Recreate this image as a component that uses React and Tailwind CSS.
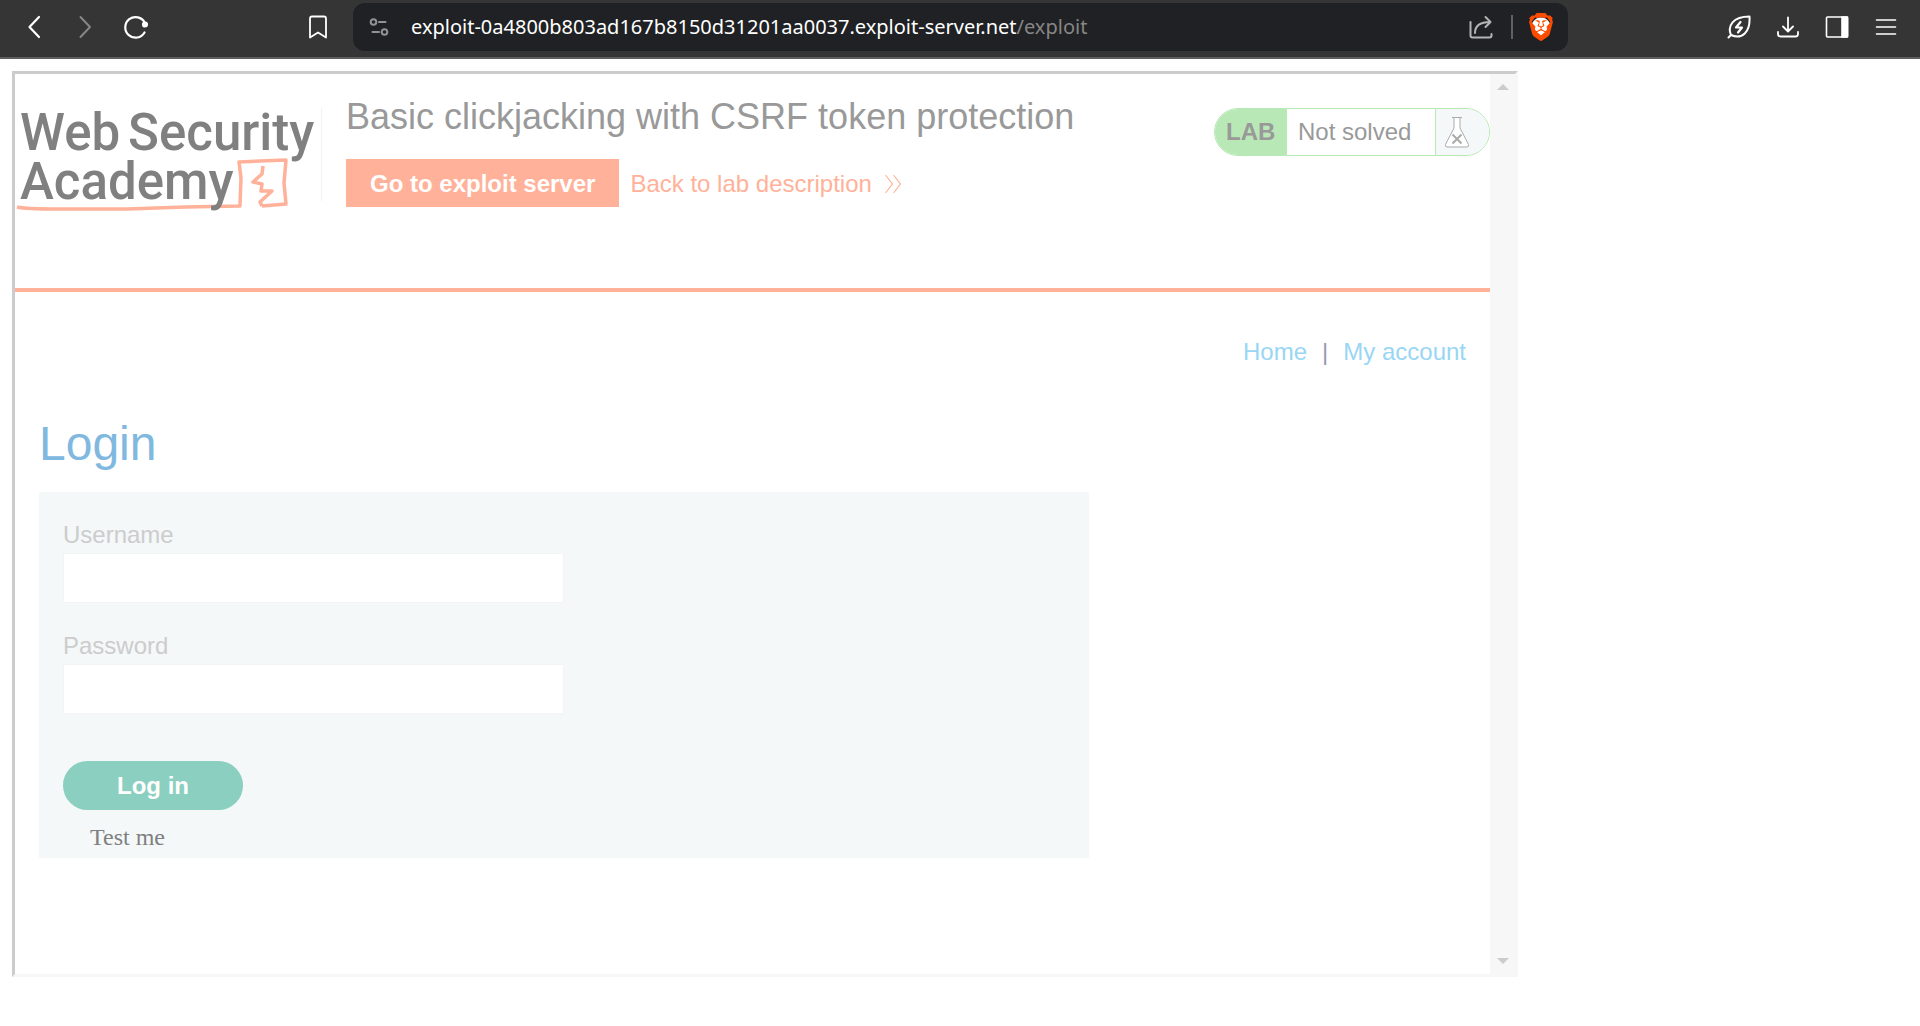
import { SiBrave } from "react-icons/si";

function ToolbarIcon({ label, className = "", children }) {
  return (
    <button type="button" aria-label={label} className={`flex h-8 w-8 shrink-0 items-center justify-center ${className}`}>
      {children}
    </button>
  );
}

function Stroke({ children, width = 2, className = "" }) {
  return (
    <svg viewBox="0 0 24 24" fill="none" stroke="currentColor" strokeWidth={width} strokeLinecap="round" strokeLinejoin="round" className={`h-6 w-6 ${className}`} aria-hidden="true">
      {children}
    </svg>
  );
}

function BrowserBar() {
  return (
    <header className="flex items-center border-b-2 border-[#5f5f5f] bg-[#353535] px-[18px] pb-[6px] pt-[3px] text-white">
      <ToolbarIcon label="Back">
        <Stroke width={2.2}><path d="M17 2 7.500 12 17 22" /></Stroke>
      </ToolbarIcon>
      <ToolbarIcon label="Forward" className="ml-5 text-[#868686]">
        <Stroke><path d="M6.500 2 16 12 6.500 22" /></Stroke>
      </ToolbarIcon>
      <ToolbarIcon label="Reload" className="ml-[18px]">
        <Stroke width={2.2}><path d="M20.500 17.500A10.300 10.300 0 1 1 20.800 7.800" /><circle cx="21" cy="9.500" r="2" fill="currentColor" /></Stroke>
      </ToolbarIcon>
      <ToolbarIcon label="Bookmark this page" className="ml-[150px]">
        <Stroke width={1.8}><path d="M4 3.500Q4 1.500 6 1.500H18Q20 1.500 20 3.500V22.500L12 17.500 4 22.500Z" /></Stroke>
      </ToolbarIcon>
      <div className="ml-[19px] flex h-12 w-[64.5%] items-center rounded-xl bg-[#202124] pr-[11px]">
        <button type="button" aria-label="Site settings" className="ml-4 flex h-8 w-6 items-center text-[#8f9297]">
          <svg viewBox="0 0 24 24" fill="none" stroke="currentColor" strokeWidth="2" strokeLinecap="round" className="h-6 w-6" aria-hidden="true">
            <circle cx="4.500" cy="7" r="2.800" /><path d="M10 7H16.500" /><circle cx="15.500" cy="17" r="2.800" /><path d="M3.500 17H10" />
          </svg>
        </button>
        <a href="#exploit" className="ml-[18px] min-w-0 flex-1 truncate font-['Noto_Sans','Open_Sans',sans-serif] text-[20px] leading-8">
          exploit-0a4800b803ad167b8150d31201aa0037.exploit-server.net<span className="text-[#868686]">/exploit</span>
        </a>
        <ToolbarIcon label="Share" className="text-[#b4b4b4]">
          <Stroke><path d="M1.500 7V20.500Q1.500 22.500 3.500 22.500H20.500Q22.500 22.500 22.500 20.500V19" /><path d="M6 18Q6 7 21 7M16.500 2 21.500 7 16.500 12" /></Stroke>
        </ToolbarIcon>
        <span className="ml-3.5 h-6 w-0.5 bg-[#5f6166]" />
        <ToolbarIcon label="Brave Shields" className="ml-3">
          <span className="flex h-7 w-7 items-center justify-center bg-[radial-gradient(circle,white_9px,transparent_10px)]">
            <SiBrave className="h-7 w-7 text-[#fb4c00]" />
          </span>
        </ToolbarIcon>
      </div>
      <div className="ml-auto flex gap-[17px]">
        <ToolbarIcon label="Battery saver">
          <Stroke><path d="M1.500 22.500 4 20C0 11 6 1.500 22.500 1.500 23.500 17 15 25 4 20" /><path d="M13.500 7 9 12.500H15L11 17.500" strokeWidth="2.200" /></Stroke>
        </ToolbarIcon>
        <ToolbarIcon label="Downloads">
          <Stroke width={1.8}><path d="M12 2.500V16M7 11.500 12 16.500 17 11.500M2 17V19Q2 21.500 4.500 21.500H19.500Q22 21.500 22 19V17" /></Stroke>
        </ToolbarIcon>
        <ToolbarIcon label="Sidebar">
          <Stroke width={1.6}><rect x="1.500" y="2" width="21" height="20" rx="1" /><path d="M17 2H22.500V22H17Z" fill="currentColor" /></Stroke>
        </ToolbarIcon>
        <ToolbarIcon label="Menu">
          <Stroke width={1.6}><path d="M2.500 5H21.500M2.500 12H21.500M2.500 19H21.500" /></Stroke>
        </ToolbarIcon>
      </div>
    </header>
  );
}

function AcademyLogo() {
  return (
    <a href="#academy" className="relative block h-[93px] w-[307px] shrink-0 border-r border-[#f2f2f2] pl-[5px] font-['Roboto',sans-serif] text-[51px] font-medium leading-[49px] text-[#808080]">
      <svg viewBox="0 0 306 108" className="absolute left-0 top-0 h-[108px] w-[306px]" fill="none" stroke="#ffb199" strokeLinejoin="round" aria-hidden="true">
        <path d="M2 99Q10 101 45 101L112 101 170 99 225 98V97L226 70 224 54 271 52 269 75 271 96 247 98" strokeWidth="3.500" />
        <path d="M248 58 247 66 238 74 247 76 246 83 257 83 245 94 247 98" strokeWidth="3.500" />
      </svg>
      <span className="relative flex gap-2"><span>Web</span><span>Security</span></span>
      <span className="relative block">Academy</span>
    </a>
  );
}

function LabStatus() {
  return (
    <div className="flex h-12 w-[276px] shrink-0 overflow-hidden rounded-full border border-[#b8e8b6] text-2xl text-[#999]">
      <strong className="flex w-[72px] items-center bg-[#b8e8b6] pl-[11px]">LAB</strong>
      <p className="flex flex-1 items-center pl-[11px]">Not solved</p>
      <span className="flex w-[54px] items-center border-l border-[#b8e8b6] bg-[#f4f8f9] pl-2">
        <svg viewBox="0 0 26 32" className="h-8 w-[26px]" fill="white" stroke="#aaaaaa" aria-hidden="true">
          <path d="M10 2V12L1.500 28.500Q1 31 3 31H23Q25 31 24.500 28.500L16 12V2M8 1.500H18" />
          <path d="M8.500 18.500 17.500 27.500M17.500 18.500 8.500 27.500" strokeWidth="2" />
        </svg>
      </span>
    </div>
  );
}

function Field({ id, label, type }) {
  return (
    <div className="mb-[25px]">
      <label htmlFor={id} className="block text-2xl leading-9 text-[#ccc]">{label}</label>
      <input id={id} name={id} type={type} className="block h-[50px] w-full max-w-[501px] border border-[#f2f4f5] bg-white px-3 text-2xl text-[#999]" />
    </div>
  );
}

export default function App() {
  return (
    <div className="min-h-screen bg-white font-['Liberation_Sans',Arial,sans-serif]">
      <BrowserBar />
      <div className="px-3 pt-3">
        <div className="flex w-full max-w-[1506px] border-[3px] border-b-[#f7f7f7] border-l-[#ccc] border-r-[#f7f7f7] border-t-[#ccc]">
          <main className="min-w-0 flex-1 pb-[116px]">
            <section className="flex items-start border-b-4 border-[#ffb199] pb-[81px] pt-[22px]">
              <div className="pt-3"><AcademyLogo /></div>
              <div className="ml-6 flex-1">
                <h2 className="text-4xl leading-[42px] text-[#999]">Basic clickjacking with CSRF token protection</h2>
                <div className="mt-[21px] flex items-center gap-[11px] text-2xl text-[#ffb199]">
                  <a href="#server" className="flex h-12 items-center bg-[#ffb199] px-6 pt-px font-bold text-white">Go to exploit server</a>
                  <a href="#description" className="flex items-center gap-3 pt-px">
                    Back to lab description
                    <svg viewBox="0 0 18 20" className="h-5 w-[18px]" fill="none" stroke="currentColor" strokeWidth="1.200" aria-hidden="true">
                      <path d="M1.500 1 8.500 10 1.500 19M9.500 1 16.500 10 9.500 19" />
                    </svg>
                  </a>
                </div>
              </div>
              <div className="pt-3"><LabStatus /></div>
            </section>
            <nav className="mt-11 flex justify-end gap-[15px] px-6 text-2xl leading-8 text-[#99d6f4]">
              <a href="#home">Home</a>
              <span className="text-[#9999ad]">|</span>
              <a href="#account">My account</a>
            </nav>
            <div className="px-6 pt-12">
              <h1 className="text-5xl leading-[56px] text-[#80b8e0]">Login</h1>
              <form className="mt-5 max-w-[1050px] bg-[#f4f8f9] px-6 pb-[5px] pt-[25px]" onSubmit={(e) => e.preventDefault()}>
                <Field id="username" label="Username" type="text" />
                <Field id="password" label="Password" type="password" />
                <button type="submit" className="mt-[47px] block h-[49px] w-[180px] rounded-full bg-[#8acfc0] text-2xl font-bold text-white">Log in</button>
                <p className="mt-[11px] pl-[27px] font-['Liberation_Serif',serif] text-2xl leading-8 text-[#808080]">Test me</p>
              </form>
            </div>
          </main>
          <div className="flex w-[25px] shrink-0 flex-col items-center justify-between bg-[#f7f7f7] py-2.5 text-[#ccc]">
            <svg viewBox="0 0 12 6" className="h-1.5 w-3" fill="currentColor" aria-hidden="true"><path d="M0 6 6 0 12 6Z" /></svg>
            <svg viewBox="0 0 12 6" className="h-1.5 w-3" fill="currentColor" aria-hidden="true"><path d="M0 0 6 6 12 0Z" /></svg>
          </div>
        </div>
      </div>
    </div>
  );
}
